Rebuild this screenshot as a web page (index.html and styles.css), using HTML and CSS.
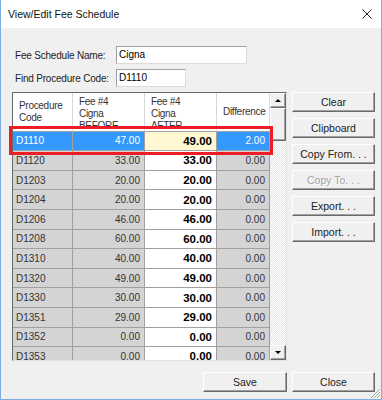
FILE: index.html
```html
<!DOCTYPE html>
<html lang="en">
<head>
  <meta charset="UTF-8">
  <title>View/Edit Fee Schedule</title>
  <link rel="stylesheet" href="styles.css">
</head>
<body>
  <div class="window">
    <div class="titlebar">
      <span class="title">View/Edit Fee Schedule</span>
      <svg class="close" width="10" height="10" viewBox="0 0 10 10">
        <path d="M0.5 0.5L9.5 9.5M9.5 0.5L0.5 9.5" stroke="#222" stroke-width="1"/>
      </svg>
    </div>

    <div class="content">
      <div class="fields">
        <div class="field">
          <label>Fee Schedule Name:</label>
          <div class="textbox wide">Cigna</div>
        </div>
        <div class="field">
          <label>Find Procedure Code:</label>
          <div class="textbox short">D1110</div>
        </div>
      </div>

      <div class="main">
        <div class="grid">
          <div class="table">
            <div class="row head">
              <div class="hcell mid">Procedure<br>Code</div>
              <div class="hcell">Fee #4<br>Cigna<br>BEFORE</div>
              <div class="hcell">Fee #4<br>Cigna<br>AFTER</div>
              <div class="hcell mid">Difference</div>
            </div>
            <div class="row sel">
              <div class="cell code">D1110</div>
              <div class="cell">47.00</div>
              <div class="cell after">49.00</div>
              <div class="cell">2.00</div>
            </div>
            <div class="row"><div class="cell code">D1120</div><div class="cell">33.00</div><div class="cell after">33.00</div><div class="cell">0.00</div></div>
            <div class="row"><div class="cell code">D1203</div><div class="cell">20.00</div><div class="cell after">20.00</div><div class="cell">0.00</div></div>
            <div class="row"><div class="cell code">D1204</div><div class="cell">20.00</div><div class="cell after">20.00</div><div class="cell">0.00</div></div>
            <div class="row"><div class="cell code">D1206</div><div class="cell">46.00</div><div class="cell after">46.00</div><div class="cell">0.00</div></div>
            <div class="row"><div class="cell code">D1208</div><div class="cell">60.00</div><div class="cell after">60.00</div><div class="cell">0.00</div></div>
            <div class="row"><div class="cell code">D1310</div><div class="cell">40.00</div><div class="cell after">40.00</div><div class="cell">0.00</div></div>
            <div class="row"><div class="cell code">D1320</div><div class="cell">49.00</div><div class="cell after">49.00</div><div class="cell">0.00</div></div>
            <div class="row"><div class="cell code">D1330</div><div class="cell">30.00</div><div class="cell after">30.00</div><div class="cell">0.00</div></div>
            <div class="row"><div class="cell code">D1351</div><div class="cell">29.00</div><div class="cell after">29.00</div><div class="cell">0.00</div></div>
            <div class="row"><div class="cell code">D1352</div><div class="cell">0.00</div><div class="cell after">0.00</div><div class="cell">0.00</div></div>
            <div class="row"><div class="cell code">D1353</div><div class="cell">0.00</div><div class="cell after">0.00</div><div class="cell">0.00</div></div>
          </div>

          <div class="vscroll">
            <div class="sbtn"><span class="arrow up"></span></div>
            <div class="thumb"></div>
            <div class="track"></div>
            <div class="sbtn"><span class="arrow down"></span></div>
          </div>

          <div class="highlight"></div>
        </div>

        <div class="side">
          <div class="btn">Clear</div>
          <div class="btn">Clipboard</div>
          <div class="btn">Copy From. . .</div>
          <div class="btn disabled">Copy To. . .</div>
          <div class="btn">Export. . .</div>
          <div class="btn">Import. . .</div>
        </div>
      </div>

      <div class="footer">
        <div class="btn save">Save</div>
        <div class="btn">Close</div>
      </div>
    </div>

    <svg class="grip" width="12" height="12" viewBox="0 0 12 12">
      <path d="M11 2L2 11M11 5L5 11M11 8L8 11" stroke="#a0a0a0" stroke-width="1"/>
      <path d="M11 3L3 11M11 6L6 11M11 9L9 11" stroke="#fff" stroke-width="1"/>
    </svg>
  </div>
</body>
</html>
```

FILE: styles.css
```css
* {
  box-sizing: border-box;
}
body {
  margin: 0;
  font-family: "Liberation Sans", Arial, sans-serif;
  font-size: 10px;
  color: #000;
  background: #fff;
}
.window {
  position: relative;
  width: 382px;
  height: 400px;
  background: #f0f0f0;
  border: 1px solid #7eaee0;
  border-top: none;
  display: flex;
  flex-direction: column;
}
.titlebar {
  height: 28px;
  background: #fff;
  display: flex;
  align-items: center;
  justify-content: space-between;
  padding: 0 9px 0 7px;
}
.title {
  font-size: 10.5px;
  color: #111;
}

.content {
  flex: 1;
  display: flex;
  flex-direction: column;
  padding: 18px 6px 0 11px;
}
.fields {
  display: flex;
  flex-direction: column;
  gap: 5px;
  padding-left: 3px;
}
.field {
  display: flex;
  align-items: center;
  height: 18px;
}
.field label {
  width: 101px;
  letter-spacing: -0.2px;
  white-space: nowrap;
  color: #222;
}
.textbox {
  height: 18px;
  background: #fff;
  border: 1px solid;
  border-color: #a0a0a0 #dcdcdc #dcdcdc #a0a0a0;
  padding: 0 2px;
  line-height: 16px;
}
.textbox.wide {
  width: 131px;
}
.textbox.short {
  width: 70px;
}

.main {
  margin-top: 5px;
  display: flex;
  gap: 5px;
}
.grid {
  position: relative;
  width: 275px;
  height: 269px;
  border: 1px solid;
  border-color: #696969 #e3e3e3 #e3e3e3 #696969;
  display: flex;
  background: #fff;
}
.table {
  width: 257px;
  overflow: hidden;
}
.row {
  display: grid;
  grid-template-columns: 60px 72px 72px 53px;
  height: 19.6px;
}
.row.head {
  height: 38.6px;
}
.hcell {
  background: #fff;
  border-right: 1px solid #d8d8d8;
  border-bottom: 1px solid #a0a0a0;
  padding: 3px 0 0 6px;
  line-height: 12px;
  letter-spacing: -0.3px;
  color: #333;
  overflow: hidden;
  white-space: nowrap;
}
.hcell.mid {
  display: flex;
  align-items: center;
  padding-top: 0;
}
.cell {
  display: flex;
  align-items: center;
  justify-content: flex-end;
  padding: 0 4px 0 3px;
  background: #d4d4d4;
  border-right: 1px solid #a0a0a0;
  border-bottom: 1px solid #a0a0a0;
  color: #333;
  white-space: nowrap;
}
.cell.code {
  justify-content: flex-start;
}
.cell.after {
  background: #fff;
  color: #000;
  font-weight: bold;
  font-size: 11.5px;
}
.row.sel .cell {
  background: #3399ff;
  color: #fff;
}
.row.sel .cell.after {
  background: #fff8d2;
  color: #000;
}

.vscroll {
  width: 16px;
  display: flex;
  flex-direction: column;
  background: repeating-conic-gradient(#fff 0 25%, #e4e4e4 0 50%) 0 0 / 2px 2px;
}
.sbtn,
.thumb {
  background: #f0f0f0;
  border: 1px solid;
  border-color: #fff #696969 #696969 #fff;
  box-shadow: inset -1px -1px #a0a0a0;
}
.sbtn {
  height: 15px;
  display: flex;
  align-items: center;
  justify-content: center;
}
.thumb {
  height: 33px;
}
.track {
  flex: 1;
}
.arrow {
  width: 0;
  height: 0;
  border-left: 3px solid transparent;
  border-right: 3px solid transparent;
}
.arrow.up {
  border-bottom: 3px solid #000;
}
.arrow.down {
  border-top: 3px solid #000;
}

.highlight {
  position: absolute;
  left: -4px;
  top: 33px;
  width: 264px;
  height: 29px;
  border: 3px solid #ee1c24;
}

.side {
  display: flex;
  flex-direction: column;
  gap: 6px;
  width: 83px;
}
.btn {
  height: 20px;
  display: flex;
  align-items: center;
  justify-content: center;
  background: #f0f0f0;
  border: 1px solid;
  border-color: #fff #696969 #696969 #fff;
  box-shadow: inset -1px -1px #a0a0a0;
  font-size: 10.5px;
  color: #222;
}
.btn.disabled {
  color: #a0a0a0;
  text-shadow: 1px 1px #fff;
}

.footer {
  margin-top: 11px;
  display: flex;
  justify-content: flex-end;
  gap: 5px;
}
.footer .btn {
  width: 83px;
}
.footer .btn.save {
  width: 84px;
}

.grip {
  position: absolute;
  right: 0;
  bottom: 0;
}
```
